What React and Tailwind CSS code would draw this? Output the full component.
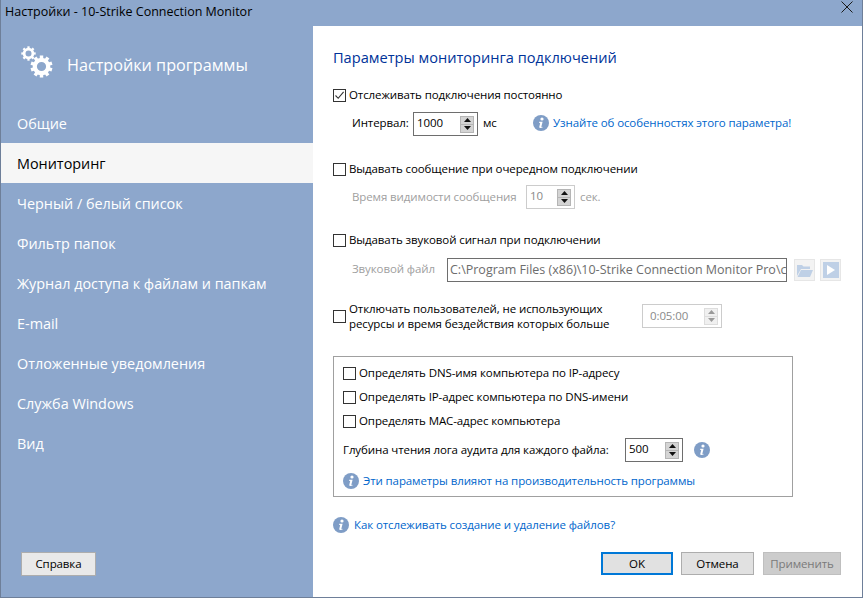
import { useState } from "react";

const FONT = "font-['Open_Sans','Noto_Sans',sans-serif]";
const BODY = "text-[11.5px] tracking-[-0.1px]";

const MENU = [
  "Общие",
  "Мониторинг",
  "Черный / белый список",
  "Фильтр папок",
  "Журнал доступа к файлам и папкам",
  "E-mail",
  "Отложенные уведомления",
  "Служба Windows",
  "Вид",
];

function GearIcon({ size, teeth, className }) {
  const angles = Array.from({ length: teeth }, (_, i) => (i * 360) / teeth);
  return (
    <svg width={size} height={size} viewBox="0 0 24 24" className={className}>
      {angles.map((a) => (
        <rect key={a} x="10.2" y="0.5" width="3.6" height="5" fill="white" transform={`rotate(${a} 12 12)`} />
      ))}
      <circle cx="12" cy="12" r="7" fill="none" stroke="white" strokeWidth="4.4" />
    </svg>
  );
}

function InfoIcon({ className = "" }) {
  return (
    <svg width="16" height="16" viewBox="0 0 16 16" className={`shrink-0 ${className}`}>
      <circle cx="8" cy="8" r="8" fill="#7f9dc6" />
      <circle cx="9" cy="4" r="1.6" fill="white" />
      <path d="M6.2 6.8h3.4L8.4 11.6c-.1.4.3.5 1.3.1l-.2.8c-1.6.8-3.5.7-3.2-.7l.9-3.9h-1z" fill="white" />
    </svg>
  );
}

function Checkbox({ checked, className = "" }) {
  return (
    <span className={`flex h-[13px] w-[13px] shrink-0 items-center justify-center border border-[#333333] bg-white ${className}`}>
      {checked ? (
        <svg width="11" height="11" viewBox="0 0 11 11">
          <path d="M1.5 5.5 4.2 8.3 9.6 1.8" fill="none" stroke="#333333" strokeWidth="1.1" />
        </svg>
      ) : null}
    </span>
  );
}

function Spinner({ value, disabled, width, faint, className = "" }) {
  const border = disabled ? "border-[#cccccc]" : "border-[#6e6e6e]";
  const text = disabled ? "text-[#8a8a8a]" : "text-black";
  const btn = faint ? "bg-[#f0f0f0] border-[#dddddd]" : "bg-[#d4d4d4] border-[#b5b5b5]";
  const arrow = faint ? "#9a9a9a" : "#111111";
  return (
    <div className={`flex h-6 items-center justify-between border ${border} bg-white pl-[3px] pr-[3px] ${width} ${className}`}>
      <span className={`${text} ${faint ? "" : "-mt-[2px]"}`}>{value}</span>
      <div className="flex flex-col">
        <span className={`flex h-[9px] w-[14px] items-center justify-center border ${btn}`}>
          <svg width="7" height="4" viewBox="0 0 7 4"><path d="M3.5 0 7 4H0z" fill={arrow} /></svg>
        </span>
        <span className={`-mt-px flex h-[9px] w-[14px] items-center justify-center border ${btn}`}>
          <svg width="7" height="4" viewBox="0 0 7 4"><path d="M0 0h7L3.5 4z" fill={arrow} /></svg>
        </span>
      </div>
    </div>
  );
}

function CheckRow({ checked, children, className = "" }) {
  return (
    <label className={`flex items-center gap-[3px] whitespace-nowrap text-black ${className}`}>
      <Checkbox checked={checked} />
      <span>{children}</span>
    </label>
  );
}

function Sidebar() {
  const [active, setActive] = useState(1);
  return (
    <aside className="flex w-[312px] shrink-0 flex-col bg-[#8da7cc]">
      <div className="flex h-[77px] items-start pl-5 pt-5">
        <div className="relative h-8 w-8 shrink-0">
          <GearIcon size={15} teeth={8} className="absolute left-0 top-0" />
          <GearIcon size={23} teeth={10} className="absolute bottom-0 right-0" />
        </div>
        <span className="ml-[14px] mt-[7px] text-[16.2px] leading-6 text-white">Настройки программы</span>
      </div>
      <nav className="flex flex-col">
        {MENU.map((item, idx) => (
          <button
            key={item}
            onClick={() => setActive(idx)}
            className={`h-10 pl-4 pt-[2px] text-left text-[14.4px] ${idx === active ? "bg-[#f6f6f6] text-black" : "text-white"}`}
          >
            {item}
          </button>
        ))}
      </nav>
      <div className={`mt-auto pb-[21px] pl-5 ${BODY}`}>
        <button className="h-6 w-[75px] border border-[#adadad] bg-[#e9e9e9] text-black">Справка</button>
      </div>
    </aside>
  );
}

function Settings() {
  return (
    <main className={`flex min-w-0 flex-1 flex-col bg-white pl-5 pr-[21px] pt-[19px] ${BODY}`}>
      <h1 className="text-[14.6px] leading-6 tracking-normal text-[#003399]">Параметры мониторинга подключений</h1>

      <CheckRow checked className="mt-[17px] h-[18px]">Отслеживать подключения постоянно</CheckRow>
      <div className="mt-2 flex h-6 items-center pl-[19px]">
        <span className="-mt-[2px] w-[61px]">Интервал:</span>
        <Spinner value="1000" width="w-[65px]" />
        <span className="-mt-[2px] ml-[5px] w-[50px]">мс</span>
        <InfoIcon className="-mt-[2px]" />
        <a className="-mt-[2px] ml-[4px] whitespace-nowrap text-[#0066cc]">Узнайте об особенностях этого параметра!</a>
      </div>

      <CheckRow className="mt-6 h-[18px]">Выдавать сообщение при очередном подключении</CheckRow>
      <div className="mt-[7px] flex h-6 items-center pl-[19px] text-[#a0a0a0]">
        <span className="w-[174px] whitespace-nowrap">Время видимости сообщения</span>
        <Spinner value="10" disabled width="w-[49px]" />
        <span className="-mt-px ml-[5px]">сек.</span>
      </div>

      <CheckRow className="mt-[22px] h-[18px]">Выдавать звуковой сигнал при подключении</CheckRow>
      <div className="mt-[9px] flex h-6 items-center pl-[19px] text-[#a0a0a0]">
        <span className="-mt-[2px] w-[95px]">Звуковой файл</span>
        <div className="h-6 w-[340px] overflow-hidden whitespace-nowrap border border-[#6e6e6e] pl-[2px] text-[12.5px] leading-[22px] tracking-normal text-[#6d6d6d]">
          C:\Program Files (x86)\10-Strike Connection Monitor Pro\c
        </div>
        <span className="ml-[7px] flex h-[22px] w-[21px] items-center justify-center border border-[#e6e6e6] bg-[#f3f3f3]">
          <svg width="18" height="15" viewBox="0 0 18 15">
            <path d="M1 2h5l1.5 1.5H14V6H5L1 13z" fill="#bfd0e6" />
            <path d="M5 7h12l-3 7H1.5z" fill="#bfd0e6" />
          </svg>
        </span>
        <span className="ml-[5px] flex h-[22px] w-[21px] items-center justify-center border border-[#e6e6e6] bg-[#f3f3f3]">
          <span className="flex h-4 w-4 items-center justify-center bg-[#bfd0e6]">
            <svg width="8" height="10" viewBox="0 0 8 10"><path d="M0 0 8 5 0 10z" fill="white" /></svg>
          </span>
        </span>
      </div>

      <div className="mt-4 flex h-9 items-center">
        <Checkbox />
        <span className="ml-[3px] w-[293px] leading-[15px]">
          Отключать пользователей, не использующих
          <br />
          ресурсы и время бездействия которых больше
        </span>
        <Spinner value="0:05:00" disabled faint width="w-[80px]" className="pl-[7px]" />
      </div>

      <section className="mt-[22px] flex h-[141px] w-[460px] flex-col border border-[#a0a0a0] pl-[9px] pt-2">
        <CheckRow className="h-4">Определять DNS-имя компьютера по IP-адресу</CheckRow>
        <CheckRow className="mt-2 h-4">Определять IP-адрес компьютера по DNS-имени</CheckRow>
        <CheckRow className="mt-2 h-4">Определять MAC-адрес компьютера</CheckRow>
        <div className="mt-[9px] flex h-6 items-center">
          <span className="w-[282px] whitespace-nowrap">Глубина чтения лога аудита для каждого файла:</span>
          <Spinner value="500" width="w-[58px]" />
          <InfoIcon className="ml-[11px]" />
        </div>
        <div className="mt-[10px] flex items-center gap-[4px]">
          <InfoIcon />
          <a className="text-[#0066cc]">Эти параметры влияют на производительность программы</a>
        </div>
      </section>

      <div className="mt-[19px] flex items-center gap-[5px]">
        <InfoIcon />
        <a className="text-[#0066cc]">Как отслеживать создание и удаление файлов?</a>
      </div>

      <div className="mt-auto flex justify-end pb-[22px]">
        <button className="h-[23px] w-[72px] border-2 border-[#0078d7] bg-[#e1e1e1] text-black">OK</button>
        <button className="ml-2 h-[23px] w-[73px] border border-[#adadad] bg-[#e1e1e1] text-black">Отмена</button>
        <button className="ml-[9px] h-[23px] w-[78px] border border-[#bfbfbf] bg-[#cccccc] text-[#7a7a7a]">Применить</button>
      </div>
    </main>
  );
}

export default function App() {
  return (
    <div className={`flex h-[598px] w-[863px] flex-col overflow-hidden border-x border-b border-[#6e7f99] bg-[#8da7cc] ${FONT}`}>
      <header className="flex h-[26px] shrink-0 items-start justify-between pl-[4px] pr-[9px] pt-[3px] text-[12.5px] leading-[17px] text-black">
        <span>Настройки - 10-Strike Connection Monitor</span>
        <svg width="12" height="12" viewBox="0 0 12 12" className="-mt-[2px]">
          <path d="M.5.5l11 11M11.5.5l-11 11" stroke="#1a1a1a" strokeWidth="1" />
        </svg>
      </header>
      <div className="flex min-h-0 flex-1">
        <Sidebar />
        <Settings />
      </div>
    </div>
  );
}
